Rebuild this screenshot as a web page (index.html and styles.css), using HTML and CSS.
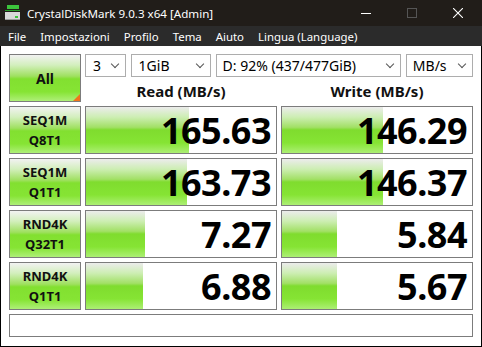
FILE: index.html
```html
<!DOCTYPE html>
<html lang="it">
  <head>
    <meta charset="UTF-8" />
    <meta name="viewport" content="width=device-width, initial-scale=1.0" />
    <link rel="stylesheet" href="styles.css">
    <title>CrystalDiskMark</title>
  </head>
  <body>
    <div class="window">
      <div class="titlebar">
        <div class="app-title">
          <svg class="app-icon" width="17" height="16" viewBox="0 0 17 16">
            <rect x="3" y="0" width="12" height="4" fill="#3cc43c" />
            <rect x="1" y="5" width="15" height="1" fill="#2a9a2a" />
            <rect x="1" y="7" width="15" height="8" fill="#d8d8d8" />
            <rect x="1" y="14" width="15" height="1" fill="#9a9a9a" />
            <rect x="11" y="11" width="3" height="2" fill="#3cc43c" />
          </svg>
          <span>CrystalDiskMark 9.0.3 x64 [Admin]</span>
        </div>
        <div class="win-controls">
          <span class="ctl ctl-min">
            <svg width="10" height="10" viewBox="0 0 10 10"><rect x="0" y="5" width="10" height="1" fill="#fff" /></svg>
          </span>
          <span class="ctl ctl-max">
            <svg width="10" height="10" viewBox="0 0 10 10"><rect x="0.5" y="0.5" width="9" height="9" fill="none" stroke="#555" /></svg>
          </span>
          <span class="ctl ctl-close">
            <svg width="10" height="10" viewBox="0 0 10 10"><path d="M0 0 L10 10 M10 0 L0 10" stroke="#fff" stroke-width="1.1" /></svg>
          </span>
        </div>
      </div>

      <div class="menubar">
        <a href="#">File</a>
        <a href="#">Impostazioni</a>
        <a href="#">Profilo</a>
        <a href="#">Tema</a>
        <a href="#">Aiuto</a>
        <a href="#">Lingua (Language)</a>
      </div>

      <div class="content">
        <div class="bench">
          <button class="btn btn-all">All<span class="corner"></span></button>

          <div class="selects">
            <div class="select sel-count"><span>3</span><i class="chev"></i></div>
            <div class="select sel-size"><span>1GiB</span><i class="chev"></i></div>
            <div class="select sel-drive"><span>D: 92% (437/477GiB)</span><i class="chev"></i></div>
            <div class="select sel-unit"><span>MB/s</span><i class="chev"></i></div>
          </div>

          <div class="col-head">Read (MB/s)</div>
          <div class="col-head">Write (MB/s)</div>

          <button class="btn btn-test">SEQ1M<br>Q8T1</button>
          <div class="cell"><div class="bar" style="width: 54%"></div><span class="value">165.63</span></div>
          <div class="cell"><div class="bar" style="width: 53%"></div><span class="value">146.29</span></div>

          <button class="btn btn-test">SEQ1M<br>Q1T1</button>
          <div class="cell"><div class="bar" style="width: 53%"></div><span class="value">163.73</span></div>
          <div class="cell"><div class="bar" style="width: 53%"></div><span class="value">146.37</span></div>

          <button class="btn btn-test">RND4K<br>Q32T1</button>
          <div class="cell"><div class="bar" style="width: 31%"></div><span class="value">7.27</span></div>
          <div class="cell"><div class="bar" style="width: 29%"></div><span class="value">5.84</span></div>

          <button class="btn btn-test">RND4K<br>Q1T1</button>
          <div class="cell"><div class="bar" style="width: 30%"></div><span class="value">6.88</span></div>
          <div class="cell"><div class="bar" style="width: 29%"></div><span class="value">5.67</span></div>

          <div class="comment"></div>
        </div>
      </div>
    </div>
  </body>
</html>
```

FILE: styles.css
```css
html,
body {
  margin: 0;
  padding: 0;
  background-color: #000;
}

.window {
  width: 482px;
  height: 347px;
  display: flex;
  flex-direction: column;
  font-family: "Noto Sans", "Open Sans", sans-serif;
  overflow: hidden;
}

.titlebar {
  height: 26px;
  background-color: #211d19;
  display: flex;
  justify-content: space-between;
  align-items: center;
  color: white;
}

.app-title {
  display: flex;
  align-items: center;
  font-size: 11.6px;
  padding-left: 4px;
}

.app-icon {
  margin-right: 6px;
}

.win-controls {
  display: flex;
  height: 100%;
}

.ctl {
  width: 46px;
  display: flex;
  align-items: center;
  justify-content: center;
}

.ctl-close {
  margin-right: 1px;
}

.menubar {
  height: 20px;
  background-color: #2b2b2b;
  display: flex;
  align-items: center;
  padding-left: 1px;
}

.menubar a {
  color: white;
  text-decoration: none;
  font-size: 11.4px;
  padding: 0 7px;
}

.content {
  flex: 1;
  background-color: white;
  border: 1px solid #000;
  border-top: none;
  padding: 8px 8px 0 8px;
}

.bench {
  display: grid;
  grid-template-columns: 72px 192px 192px;
  grid-template-rows: 23px 21px 48px 48px 48px 48px 23px;
  gap: 4px;
}

.btn {
  font-family: "Noto Sans", "Open Sans", sans-serif;
  font-weight: bold;
  color: #111;
  border: 1px solid #7c7c7c;
  padding: 0;
  margin: 0;
  background: linear-gradient(to bottom, #f2f2f2 0%, #d3efbd 22%, #9fe060 46%, #82e030 52%, #86e434 80%, #aeef78 100%);
}

.btn-all {
  grid-row: 1 / span 2;
  font-size: 14px;
  position: relative;
}

.corner {
  position: absolute;
  right: 0;
  bottom: 0;
  width: 0;
  height: 0;
  border-left: 7px solid transparent;
  border-bottom: 7px solid #f2741c;
}

.btn-test {
  font-size: 13px;
  line-height: 20px;
}

.selects {
  grid-column: 2 / span 2;
  display: flex;
  gap: 5px;
}

.select {
  border: 1px solid #adadad;
  background-color: white;
  display: flex;
  align-items: center;
  justify-content: space-between;
  padding: 0 7px 0 7px;
  font-size: 14px;
  color: #000;
}

.sel-count {
  width: 25px;
}

.sel-size {
  width: 65px;
}

.sel-drive {
  width: 173px;
  padding-left: 6px;
}

.sel-unit {
  width: 53px;
  padding-left: 6px;
}

.chev {
  width: 5px;
  height: 5px;
  border-right: 1px solid #555;
  border-bottom: 1px solid #555;
  transform: rotate(45deg);
  margin-top: -4px;
}

.col-head {
  font-size: 15px;
  font-weight: bold;
  text-align: center;
  line-height: 21px;
  color: #111;
}

.cell {
  border: 1px solid #7c7c7c;
  position: relative;
  display: flex;
  align-items: center;
  justify-content: flex-end;
  padding-right: 5px;
}

.bar {
  position: absolute;
  left: 0;
  top: 0;
  bottom: 0;
  background: linear-gradient(to bottom, #ececec 0%, #cdeeb3 22%, #a2e066 44%, #7fdc2e 50%, #86e434 78%, #acef74 100%);
}

.value {
  position: relative;
  font-size: 36px;
  font-weight: bold;
  color: #000;
  letter-spacing: -0.5px;
}

.comment {
  grid-column: 1 / span 3;
  border: 1px solid #7c7c7c;
}
```
